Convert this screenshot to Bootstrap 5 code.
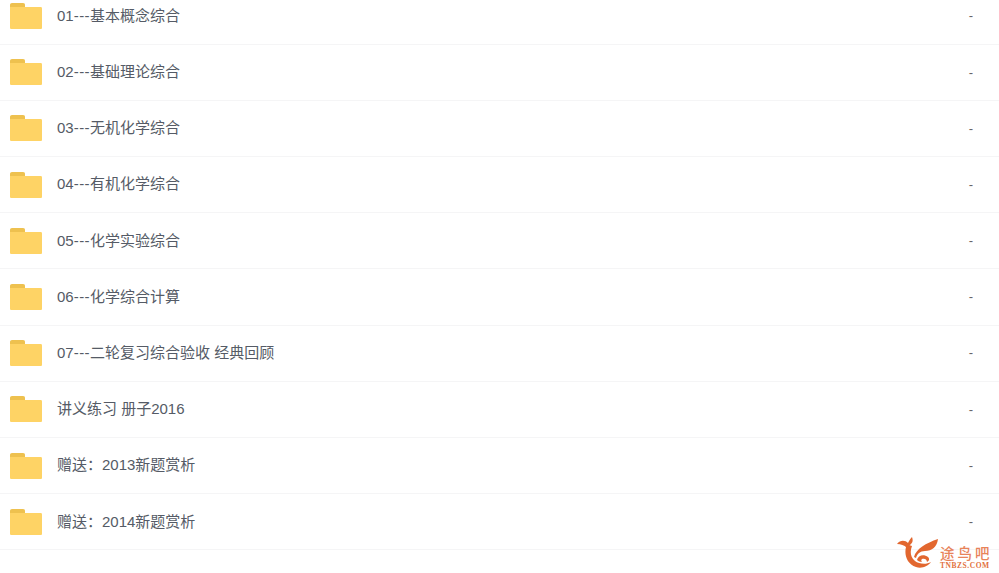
<!DOCTYPE html>
<html lang="en">
<head>
    <meta charset="UTF-8">
    <meta name="viewport" content="width=device-width, initial-scale=1.0">
    <title>文件列表</title>
    <link href="https://cdn.jsdelivr.net/npm/bootstrap@5.3.3/dist/css/bootstrap.min.css" rel="stylesheet">
    <style>
        html, body {
            height: 573px;
            overflow: hidden;
            background-color: #fff;
        }
        .file-list {
            margin-top: -11.5px;
        }
        .file-row {
            height: 56.2px;
            border-bottom: 1px solid #f5f5f6;
            background-color: #fff;
            padding-left: 10px;
            padding-right: 26px;
            font-family: "Liberation Sans", "Noto Sans CJK SC", sans-serif;
            font-size: 15px;
            color: #555b66;
        }
        .file-icon {
            width: 32px;
            height: 26px;
            margin-right: 15px;
            flex-shrink: 0;
        }
        .dash {
            letter-spacing: .45px;
        }
        .file-size {
            font-size: 13px;
            color: #666;
        }
        .site-mark {
            position: absolute;
            left: 897px;
            top: 537px;
            height: 31px;
            color: #e2703c;
        }
        .site-mark svg {
            width: 42px;
            height: 31px;
            flex-shrink: 0;
        }
        .site-text {
            margin-left: 1px;
            padding-top: 7px;
        }
        .site-name {
            font-family: "Noto Sans CJK SC", sans-serif;
            font-size: 14.500px;
            font-weight: 500;
            line-height: 18px;
            letter-spacing: 3px;
            color: #e8835a;
        }
        .site-url {
            font-family: "Liberation Serif", serif;
            font-size: 7.5px;
            font-weight: 700;
            line-height: 7px;
            letter-spacing: .55px;
        }
    </style>
</head>
<body>
    <div class="file-list" id="fileList"></div>

    <div class="site-mark d-flex">
        <svg viewBox="0 0 42 31">
            <path d="M0 7 C3 3 8 3 11 6 C12 4 13 2 15 0 C16 3 16 5 14 7 C12 9 11 10 10 11 C7 8 4 7 0 7Z" fill="#e2672f"/>
            <path d="M9 10 C7 18 10 27 19 30 C25 32 31 29 34 25 C29 28 22 27 18 24 C13 20 13 14 15 9 L12 8Z" fill="#e2672f"/>
            <path d="M17 20 C19 12 29 6 41 2 C40 10 35 14 28 14 C23 14 20 17 19 21Z" fill="#e2672f"/>
            <path d="M20 23 C21 18 27 17 31 20 C33 22 32 24 30 25 C30 22 27 21 25 22 C24 23 24 24 25 25 C23 25 21 24 20 23Z" fill="#e2672f"/>
        </svg>
        <div class="site-text text-nowrap">
            <div class="site-name">途鸟吧</div>
            <div class="site-url">TNBZS.COM</div>
        </div>
    </div>

    <script>
        let files = [
            '01<span class="dash">---</span>基本概念综合',
            '02<span class="dash">---</span>基础理论综合',
            '03<span class="dash">---</span>无机化学综合',
            '04<span class="dash">---</span>有机化学综合',
            '05<span class="dash">---</span>化学实验综合',
            '06<span class="dash">---</span>化学综合计算',
            '07<span class="dash">---</span>二轮复习综合验收 经典回顾',
            '讲义练习 册子2016',
            '赠送：2013新题赏析',
            '赠送：2014新题赏析'
        ];

        let folderIcon = `
            <svg class="file-icon" viewBox="0 0 32 26">
                <path d="M0 2 C0 .8 .8 0 2 0 H13 C14.500 0 15 .8 15 2 V5 H0Z" fill="#eec14f"/>
                <path d="M0 4 H30.500 C31.500 4 32 4.500 32 5.500 V24.500 C32 25.500 31.500 26 30.500 26 H1.500 C.5 26 0 25.500 0 24.500Z" fill="#fed365"/>
            </svg>`;

        let list = document.getElementById('fileList');
        files.forEach(name => {
            let row = document.createElement('div');
            row.className = 'file-row d-flex align-items-center';
            row.innerHTML = `${folderIcon}<span>${name}</span><span class="file-size ms-auto">-</span>`;
            list.appendChild(row);
        });
    </script>
    <script src="https://cdn.jsdelivr.net/npm/bootstrap@5.3.3/dist/js/bootstrap.bundle.min.js"></script>
</body>
</html>
